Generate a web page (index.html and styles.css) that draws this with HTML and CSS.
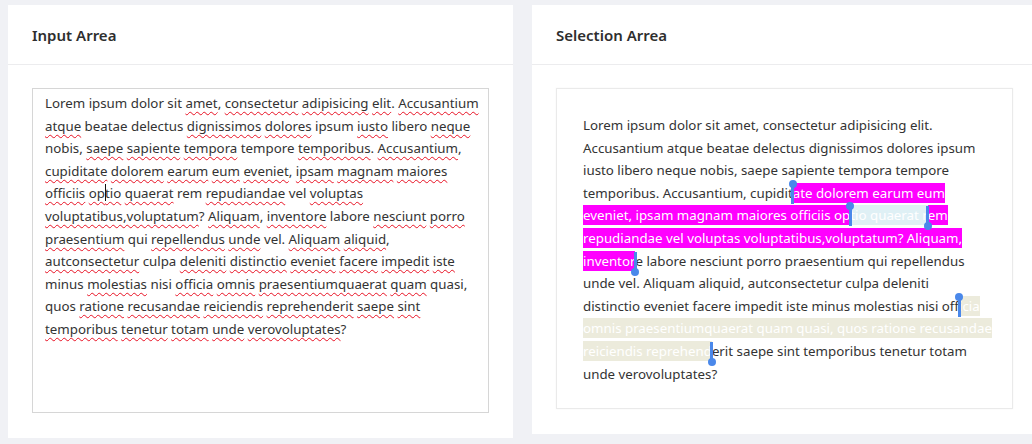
FILE: index.html
```html
<!DOCTYPE html>
<html lang="en">
<head>
<meta charset="utf-8">
<title>Selection demo</title>
<link rel="stylesheet" href="styles.css">
</head>
<body>
<div class="page">
  <section class="card card-input">
    <header class="card-head"><h2 class="card-title">Input Arrea</h2></header>
    <div class="card-body">
      <div class="editor">Lorem ipsum dolor sit <span class="sp">amet</span>, <span class="sp">consectetur</span> <span class="sp">adipisicing</span> <span class="sp">elit</span>. <span class="sp">Accusantium</span> <span class="sp">atque</span> beatae delectus <span class="sp">dignissimos</span> <span class="sp">dolores</span> ipsum <span class="sp">iusto</span> libero <span class="sp">neque</span> nobis, <span class="sp">saepe</span> <span class="sp">sapiente</span> <span class="sp">tempora</span> tempore <span class="sp">temporibus</span>. <span class="sp">Accusantium</span>, <span class="sp">cupiditate</span> <span class="sp">dolorem</span> <span class="sp">earum</span> <span class="sp">eum</span> <span class="sp">eveniet</span>, <span class="sp">ipsam</span> <span class="sp">magnam</span> <span class="sp">maiores</span> <span class="sp">officiis</span> <span class="sp">op<span class="caret"></span>tio</span> <span class="sp">quaerat</span> rem <span class="sp">repudiandae</span> vel <span class="sp">voluptas</span> <span class="sp">voluptatibus,voluptatum</span>? <span class="sp">Aliquam</span>, <span class="sp">inventore</span> labore <span class="sp">nesciunt</span> <span class="sp">porro</span> <span class="sp">praesentium</span> qui <span class="sp">repellendus</span> <span class="sp">unde</span> vel. <span class="sp">Aliquam</span> <span class="sp">aliquid</span>, <span class="sp">autconsectetur</span> culpa <span class="sp">deleniti</span> <span class="sp">distinctio</span> <span class="sp">eveniet</span> <span class="sp">facere</span> <span class="sp">impedit</span> <span class="sp">iste</span> minus <span class="sp">molestias</span> nisi <span class="sp">officia</span> <span class="sp">omnis</span> <span class="sp">praesentiumquaerat</span> <span class="sp">quam</span> quasi, quos <span class="sp">ratione</span> <span class="sp">recusandae</span> <span class="sp">reiciendis</span> <span class="sp">reprehenderit</span> <span class="sp">saepe</span> <span class="sp">sint</span> <span class="sp">temporibus</span> <span class="sp">tenetur</span> <span class="sp">totam</span> <span class="sp">unde</span> <span class="sp">verovoluptates</span>?</div>
    </div>
  </section>
  <section class="card card-select">
    <header class="card-head"><h2 class="card-title">Selection Arrea</h2></header>
    <div class="card-body">
      <div class="viewer">Lorem ipsum dolor sit amet, consectetur adipisicing elit. Accusantium atque beatae delectus dignissimos dolores ipsum iusto libero neque nobis, saepe sapiente tempora tempore temporibus. Accusantium, cupidit<span class="handle handle-start"></span><span class="mark mark-pink">ate dolorem earum eum eveniet, ipsam magnam maiores officiis op<span class="handle handle-start"></span><span class="mark mark-blue">tio quaerat r</span><span class="handle handle-end"></span>em repudiandae vel voluptas voluptatibus,voluptatum? Aliquam, inventor</span><span class="handle handle-end"></span>e labore nesciunt porro praesentium qui repellendus unde vel. Aliquam aliquid, autconsectetur culpa deleniti<br>distinctio eveniet facere impedit iste minus molestias nisi off<span class="handle handle-start"></span><span class="mark mark-beige">icia omnis praesentiumquaerat quam quasi, quos ratione recusandae reiciendis reprehend</span><span class="handle handle-end"></span>erit saepe sint temporibus tenetur totam unde verovoluptates?</div>
    </div>
  </section>
</div>
</body>
</html>
```
FILE: styles.css
```css
html, body {
  margin: 0;
  padding: 0;
  overflow: hidden;
  background: #f0f1f5;
}

body {
  font-family: "Noto Sans", "Open Sans", sans-serif;
  color: #333;
}

.page {
  display: flex;
  align-items: flex-start;
  gap: 19px;
  padding: 5px 0 0 8px;
  width: max-content;
}

.card {
  flex: none;
  width: 505px;
  background: #fff;
}

.card-head {
  height: 59px;
  padding: 0 24px;
  display: flex;
  align-items: center;
  border-bottom: 1px solid #ececee;
}

.card-title {
  margin: 0;
  font-size: 15px;
  font-weight: 600;
  color: #2e2e2e;
  line-height: 20px;
  padding-top: 1px;
}

.card-body {
  padding: 23px 24px 25px 24px;
}

.editor {
  box-sizing: border-box;
  height: 325px;
  border: 1px solid #d6d6d6;
  padding: 3px 7px 3px 12px;
  font-size: 13.3px;
  line-height: 22.6px;
  color: #333;
}

.sp {
  text-decoration: underline wavy #e81123;
  text-decoration-thickness: 1px;
  text-underline-offset: 3px;
  text-decoration-skip-ink: none;
}

.caret {
  display: inline-block;
  width: 0;
  height: 17px;
  border-left: 1px solid #111;
  margin-right: -1px;
  vertical-align: text-top;
}

.viewer {
  border: 1px solid #eaeaea;
  box-shadow: 0 0 2px rgba(0, 0, 0, 0.04);
  padding: 25px 19px 23px 26px;
  font-size: 13.3px;
  line-height: 22.6px;
  color: #333;
}

.mark {
  color: #fff;
  padding: 1px 0;
}

.mark-pink {
  background: #ff00ff;
}

.mark-blue {
  background: #dff0f5;
}

.mark-beige {
  background: #ecebdc;
}

.handle {
  position: relative;
  display: inline-block;
  width: 3px;
  height: 20px;
  margin: 0 -1.5px;
  vertical-align: text-top;
  background: #4a88ea;
  z-index: 1;
}

.handle::after {
  content: "";
  position: absolute;
  left: -2.5px;
  width: 8px;
  height: 8px;
  border-radius: 50%;
  background: #4a88ea;
}

.handle-start::after {
  top: -4px;
}

.handle-end::after {
  bottom: -4px;
}
```
